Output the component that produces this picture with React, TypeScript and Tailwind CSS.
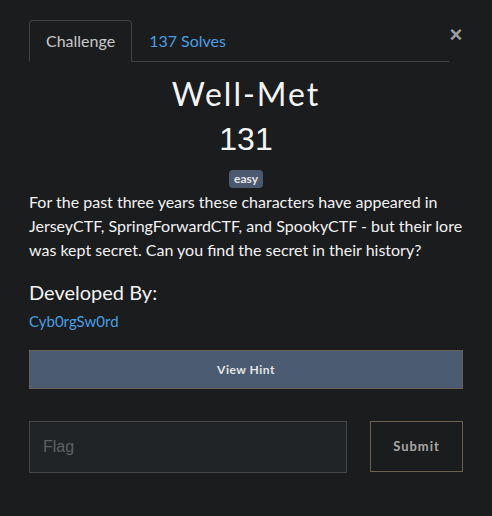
const App = () => {
  return (
    <div className="w-[492px] h-[516px] bg-[#1b1c1e] px-[29px] pt-[20px] font-['Lato',sans-serif] text-[#f2f2f2]">
      {/* Tabs */}
      <div className="flex items-start">
        <div className="flex flex-1 items-end border-b border-[#414244]">
          <div className="h-[42px] px-[16px] -mb-px flex items-center border border-[#414244] border-b-[#1b1c1e] rounded-t-[4px] text-[16px] text-[#c9c9c9] bg-[#1b1c1e]">
            Challenge
          </div>
          <div className="h-[41px] px-[17px] flex items-center text-[16px] text-[#4a9fe0]">
            137 Solves
          </div>
        </div>
        <button className="w-[14px] h-[30px] flex items-center justify-center text-[#9c9c9c] text-[22px] font-bold leading-none font-['Liberation_Sans',sans-serif]">
          ×
        </button>
      </div>

      {/* Heading */}
      <div className="flex flex-col items-center">
        <h1 className="mt-[13px] text-[32px] leading-[38px] tracking-[2px] text-[#f4f4f4]">
          Well-Met
        </h1>
        <div className="mt-[8px] text-[32px] leading-[37px] font-['Liberation_Sans',sans-serif] text-[#f4f4f4]">
          131
        </div>
        <span className="mt-[12px] px-[5px] h-[18px] flex items-center rounded-[4px] bg-[#4a596f] text-[12px] font-bold text-[#e8e8e8]">
          easy
        </span>
      </div>

      {/* Description */}
      <p className="mt-[2px] text-[16px] leading-[24px] text-[#f2f2f2]">
        For the past three years these characters have appeared in JerseyCTF, SpringForwardCTF, and SpookyCTF - but their lore was kept secret. Can you find the secret in their history?
      </p>

      <h3 className="mt-[18px] text-[20px] leading-[24px] text-[#f2f2f2]">Developed By:</h3>
      <div className="mt-[6px] text-[15px] leading-[22px] text-[#4a9fe0]">Cyb0rgSw0rd</div>

      <button className="mt-[18px] w-full h-[39px] bg-[#4a5b72] border border-[#6b6152] text-[12px] font-bold tracking-[0.5px] text-[#e6e6e6]">
        View Hint
      </button>

      {/* Flag form */}
      <div className="mt-[32px] flex items-start justify-between">
        <input
          type="text"
          placeholder="Flag"
          className="w-[318px] h-[52px] bg-[#212427] border border-[#464749] px-[13px] text-[16px] font-['Liberation_Sans',sans-serif] text-[#ddd] placeholder:text-[#5f6061] outline-none"
        />
        <button className="w-[93px] h-[51px] border border-[#6b6152] text-[13px] font-bold tracking-[1px] text-[#a8a8a8]">
          Submit
        </button>
      </div>
    </div>
  );
};

export default App;
